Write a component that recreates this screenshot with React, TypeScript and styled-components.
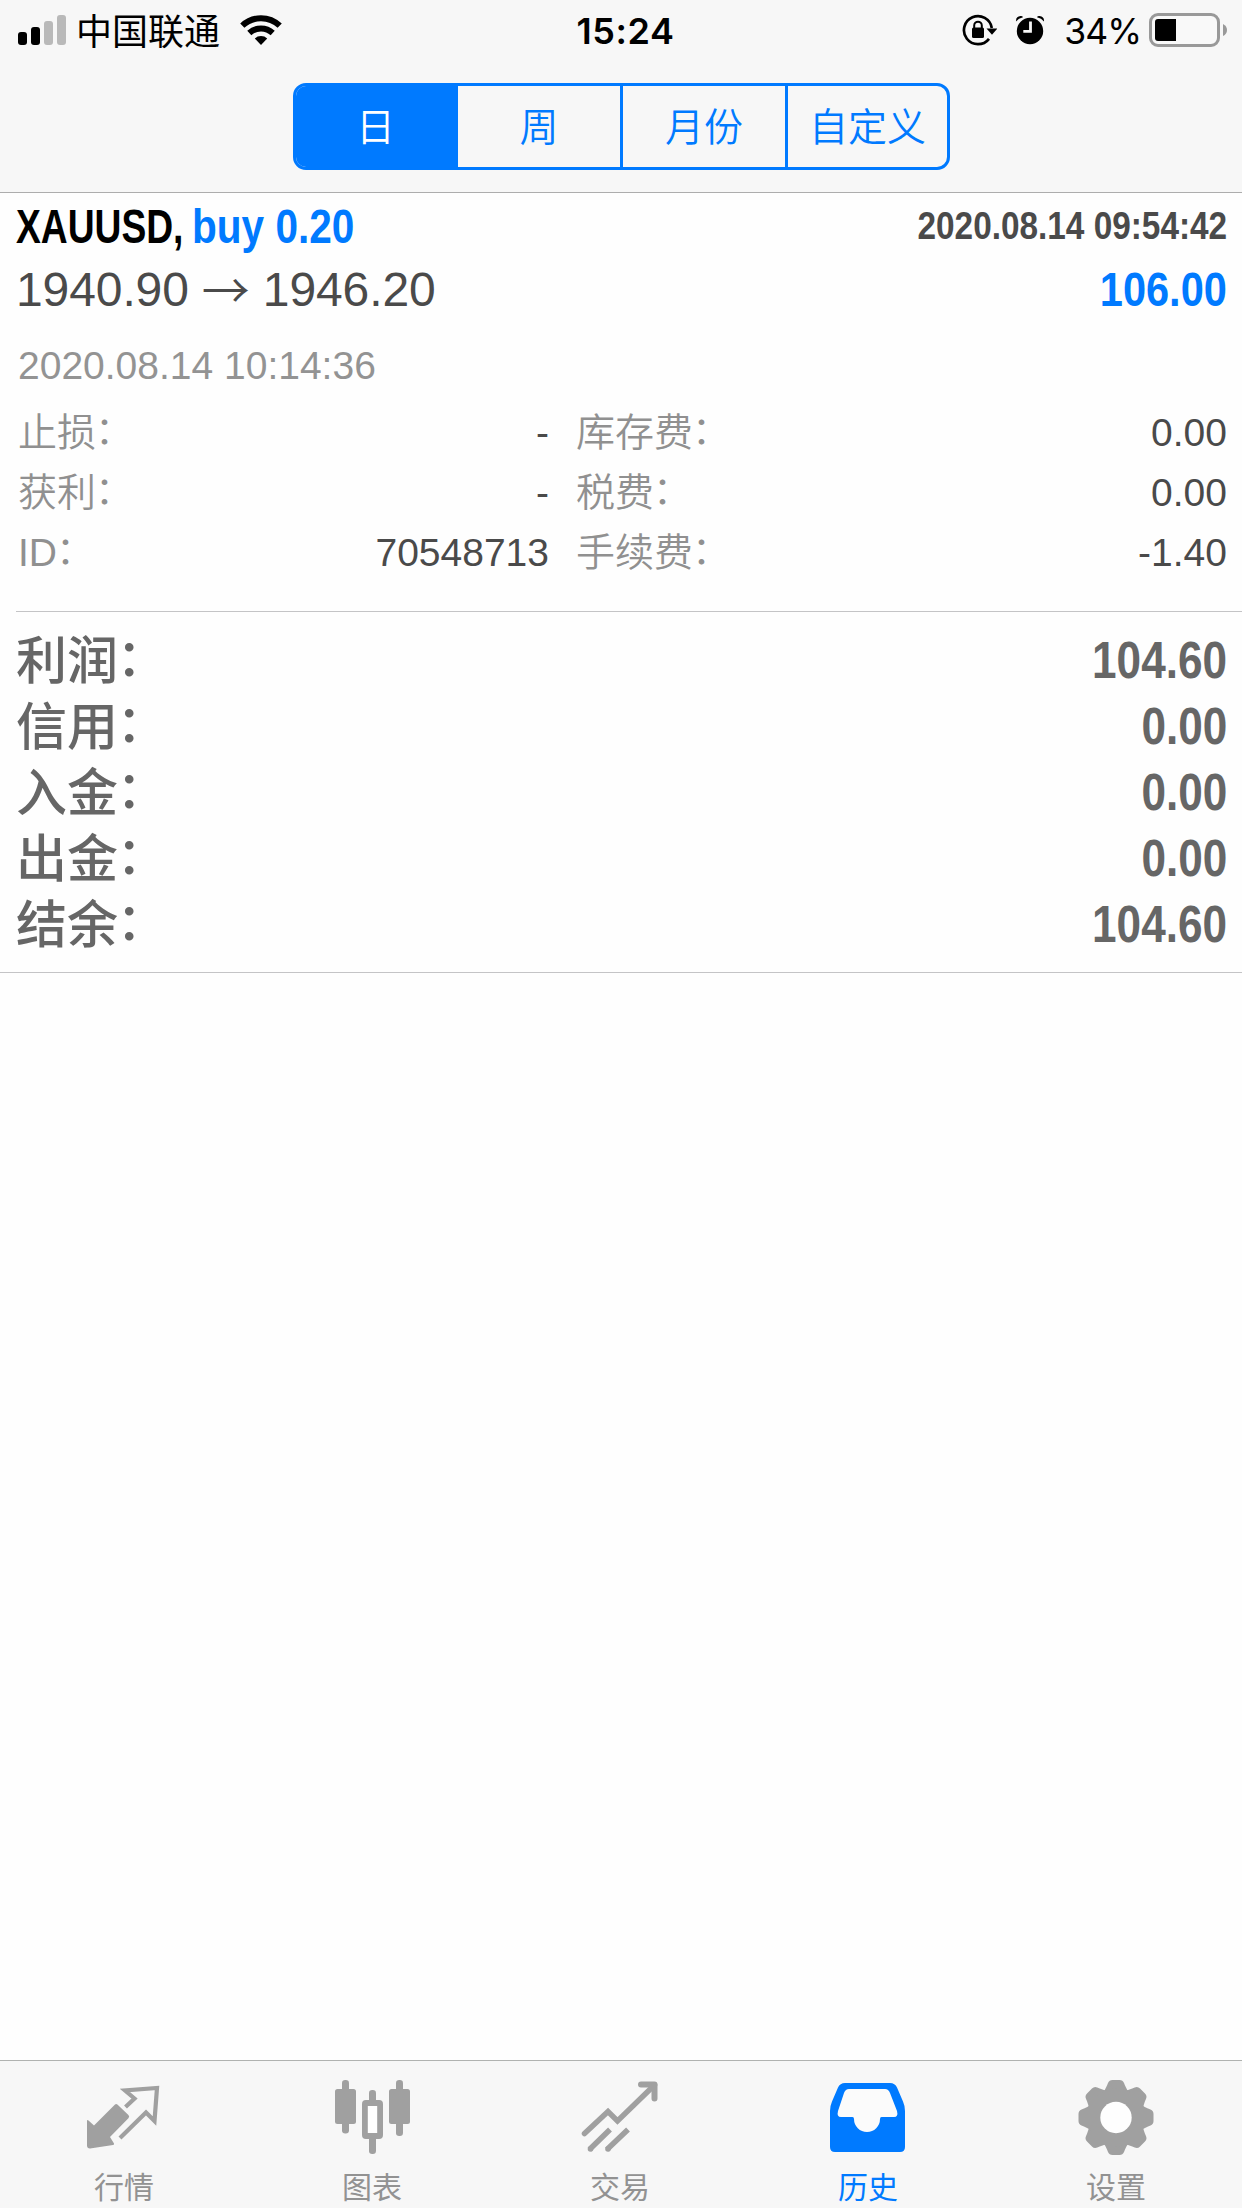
import React from "react";
import styled, { createGlobalStyle } from "styled-components";

const BLUE = "#007aff";
const LATIN = `"Liberation Sans", "Noto Sans CJK SC", sans-serif`;
const CJK = `"Noto Sans CJK SC", "Liberation Sans", sans-serif`;

const GlobalStyle = createGlobalStyle`
  * { box-sizing: border-box; }
  body { margin: 0; background: #fefefe; }
`;

const Screen = styled.div`
  display: flex;
  flex-direction: column;
  width: 1242px;
  height: 2208px;
  overflow: hidden;
  background: #fefefe;
  font-family: ${LATIN};
`;

const Header = styled.header`
  height: 193px;
  flex: none;
  background: #f7f7f7;
  border-bottom: 1px solid #adadad;
`;

const StatusBar = styled.div`
  display: grid;
  grid-template-columns: 1fr auto 1fr;
  height: 60px;
  padding: 0 15px 0 17px;
  color: #000;
`;

const StatusGroup = styled.div<{ $end?: boolean }>`
  display: flex;
  align-items: flex-start;
  justify-content: ${(p) => (p.$end ? "flex-end" : "flex-start")};
  height: 60px;
`;

const Carrier = styled.span`
  margin: 0 20px 0 9px;
  font: 400 36px/59px ${CJK};
`;

const Clock = styled.time`
  font: 600 36px/63px Inter, sans-serif;
  letter-spacing: 0.6px;
  padding-left: 7px;
`;

const Indicators = styled.div`
  display: flex;
  gap: 18px;
`;

const Percent = styled.span`
  margin: 0 8px 0 19px;
  font: 400 35.5px/63px Inter, sans-serif;
  letter-spacing: -1px;
`;

const Segments = styled.nav`
  display: grid;
  grid-template-columns: 162px 165px 165px 159px;
  width: 657px;
  height: 87px;
  margin: 23px 0 0 293px;
  border: 3px solid ${BLUE};
  border-radius: 13px;
  overflow: hidden;
`;

const Segment = styled.button<{ $active?: boolean }>`
  height: 81px;
  padding: 0 0 5px;
  border: 0;
  border-right: 3px solid ${BLUE};
  background: ${(p) => (p.$active ? BLUE : "transparent")};
  color: ${(p) => (p.$active ? "#fff" : BLUE)};
  font: 350 39px/76px ${CJK};
  text-align: center;
  white-space: nowrap;
  &:last-child { border-right: 0; }
`;

const Content = styled.main`
  flex: 1;
`;

const Deal = styled.section`
  display: flex;
  flex-direction: column;
  height: 418px;
  padding: 9px 15px 0 16px;
`;

const Line = styled.div<{ $h: number }>`
  display: flex;
  justify-content: space-between;
  height: ${(p) => p.$h}px;
  line-height: ${(p) => p.$h}px;
  white-space: nowrap;
`;

const Condensed = styled.span<{ $scale: number; $size: number; $color: string; $end?: boolean; $width?: number }>`
  display: block;
  width: ${(p) => (p.$width ? `${p.$width}px` : "auto")};
  font-weight: 700;
  font-size: ${(p) => p.$size}px;
  color: ${(p) => p.$color};
  transform: scaleX(${(p) => p.$scale});
  transform-origin: ${(p) => (p.$end ? "right" : "left")} center;
`;

const OpenTime = styled(Condensed)`
  line-height: 48px;
`;

const Title = styled.div`
  display: flex;
`;

const Prices = styled.div`
  display: flex;
  font-size: 48px;
  letter-spacing: -0.1px;
  color: #4a4a4a;
`;

const Arrow = styled.span`
  width: 74px;
  line-height: 70px;
  text-align: center;
  font-family: "Noto Sans CJK SC", sans-serif;
  font-weight: 350;
`;

const CloseTime = styled.div`
  height: 60px;
  margin: 8px 0 7px 2px;
  font-size: 39px;
  line-height: 60px;
  color: #939393;
`;

const Details = styled.dl`
  display: grid;
  grid-template-columns: 531px 651px;
  grid-auto-rows: 60px;
  column-gap: 27px;
  margin: 0 0 0 2px;
`;

const Detail = styled.div`
  display: flex;
  justify-content: space-between;
  height: 60px;
  font-size: 39px;
  line-height: 60px;
`;

const DetailLabel = styled.dt`
  color: #909090;
  font-family: ${LATIN};
  font-weight: 350;
`;

const DetailValue = styled.dd`
  margin: 0;
  color: #4a4a4a;
`;

const Colon = styled.span`
  line-height: 1;
  vertical-align: 0.06em;
  margin-left: -0.03em;
`;

const Summary = styled.section`
  margin-left: 16px;
  height: 361px;
  padding: 16px 15px 0 0;
  border-top: 1px solid #c4c4c6;
`;

const SummaryLabel = styled.span`
  height: 60px;
  font: 500 51px/58px ${CJK};
  color: #666;
`;

const Rule = styled.hr`
  height: 1px;
  margin: 0;
  border: 0;
  background: #c4c4c6;
`;

const TabBar = styled.footer`
  display: grid;
  grid-template-columns: repeat(5, 248px);
  height: 148px;
  flex: none;
  background: #f7f7f7;
  border-top: 1px solid #b0b2b0;
`;

const Tab = styled.div<{ $active?: boolean }>`
  display: flex;
  flex-direction: column;
  align-items: center;
  padding-top: 17px;
  color: ${(p) => (p.$active ? BLUE : "#a0a0a0")};
`;

const TabLabel = styled.span<{ $active?: boolean }>`
  margin-top: 5px;
  font: 400 30px/36px ${CJK};
  color: ${(p) => (p.$active ? BLUE : "#929292")};
`;

const SignalIcon = () => (
  <svg width="50" height="60" viewBox="17 0 50 60">
    <rect x="18" y="32" width="9" height="13" rx="3" />
    <rect x="31" y="27" width="9" height="18" rx="3" />
    <rect x="44" y="21" width="9" height="24" rx="3" fill="#b9b9b9" />
    <rect x="57" y="15" width="9" height="30" rx="3" fill="#b9b9b9" />
  </svg>
);

const WifiIcon = () => (
  <svg width="42" height="60" viewBox="240 0 42 60" fill="none" stroke="#000" strokeWidth="6">
    <path d="M242.3 25.700a27 27 0 0 1 37.400 0" />
    <path d="M249.300 33a17.200 17.200 0 0 1 23.400 0" />
    <path d="M254.800 38.600a9 9 0 0 1 12.400 0L261 45z" fill="#000" stroke="none" />
  </svg>
);

const RotationLockIcon = () => (
  <svg width="35" height="60" viewBox="961 0 35 60">
    <path d="M990.800 28a14 14 0 1 0-2.800 10.800" fill="none" stroke="#000" strokeWidth="2.700" />
    <path d="M985.500 28.500h11l-5.500 6.200z" />
    <rect x="971" y="27.500" width="12" height="10.500" rx="1.500" />
    <path d="M973.200 28.500v-3a3.800 3.800 0 0 1 7.600 0v3" fill="none" stroke="#000" strokeWidth="2" />
  </svg>
);

const AlarmIcon = () => (
  <svg width="30" height="60" viewBox="1015 0 30 60">
    <circle cx="1030" cy="31" r="13.200" />
    <path d="M1030.500 21.500v9.800h-7.200" fill="none" stroke="#f7f7f7" strokeWidth="2.800" />
    <path d="M1016 21.500q-.5-5 4.500-5.500 2-.2 2.500 1.200-4.500 1-7 4.300zM1044 21.500q.5-5-4.500-5.500-2-.2-2.500 1.200 4.500 1 7 4.300z" />
  </svg>
);

const BatteryIcon = () => (
  <svg width="78" height="60" viewBox="1149 0 78 60">
    <rect x="1150.500" y="14.500" width="68" height="31" rx="7.500" fill="#f9f9f9" stroke="#999" strokeWidth="3" />
    <path d="M1158 19h18v22h-18q-3 0-3-3V22q0-3 3-3z" />
    <path d="M1223 24q4 2 4 6t-4 6z" fill="#999" />
  </svg>
);

const QuotesIcon = () => (
  <svg width="84" height="84" viewBox="82 2078 84 84">
    <path d="M87 2120.500q0-1 1.500 0l5.500 5 21-21q1.200-1 2.400 0l11 10.500q1.600 1.600 0 3.200L110 2137l4 6.500q.5 1.200-1 1.500l-23 3.500q-3 0-3-3z" fill="currentColor" />
    <path d="M125.500 2107l9-8.500-9.500-8 32-2.500-2.500 33-8.500-8.500-26 25.500" fill="none" stroke="currentColor" strokeWidth="4.200" />
  </svg>
);

const ChartIcon = () => (
  <svg width="84" height="84" viewBox="330 2078 84 84" fill="currentColor">
    <rect x="342" y="2080" width="7" height="53.500" rx="3.200" />
    <rect x="335" y="2089" width="21" height="35" rx="2.500" />
    <rect x="396" y="2080" width="7" height="56" rx="3.200" />
    <rect x="389" y="2089" width="21" height="35" rx="2.500" />
    <rect x="369" y="2090" width="7" height="20" rx="3.200" />
    <rect x="369" y="2133" width="7" height="21" rx="3.200" />
    <rect x="364.900" y="2103" width="15.200" height="33" rx="1" fill="#fefefe" stroke="currentColor" strokeWidth="5.800" />
  </svg>
);

const TradeIcon = () => (
  <svg width="84" height="84" viewBox="578 2078 84 84" fill="none" stroke="currentColor" strokeWidth="5.500">
    <path d="M584.500 2133.500l23.500-22 9.500 9.500 37-36" strokeLinecap="round" />
    <path d="M641 2084.500h13.500v14" strokeWidth="6" strokeLinejoin="round" strokeLinecap="round" />
    <path d="M589.500 2149.500l20.500-20M607 2149.500l21-20" />
    <circle cx="590.500" cy="2149" r="2.800" fill="currentColor" stroke="none" />
    <circle cx="608" cy="2149" r="2.800" fill="currentColor" stroke="none" />
  </svg>
);

const HistoryIcon = () => (
  <svg width="84" height="84" viewBox="826 2078 84 84">
    <path fill="currentColor" d="M845 2083h45q5 0 7 4.500l6 14q2 4.500 2 9.500v36q0 5-5 5h-65q-5 0-5-5v-36q0-5 2-9.500l6-14q2-4.500 7-4.500z" />
    <path fill="#fbfbfb" d="M849 2089q-3.500 0-5 4l-6 18q-1.500 6 3 6h11.500q1.500 0 1.500 2a13 13 0 0 0 26 0q0-2 1.500-2H894q4.500 0 3-6l-7-18q-1.500-4-5-4z" />
  </svg>
);

const SettingsIcon = () => (
  <svg width="84" height="84" viewBox="-42 -39.500 84 84" fill="currentColor">
    {[0, 45, 90, 135, 180, 225, 270, 315].map((a) => (
      <path key={a} transform={`rotate(${a})`} d="M-13-25q2-2.500 4-7l1-2.500q1.200-3 4.500-3h7q3.300 0 4.500 3L9-32q2 4.500 4 7z" />
    ))}
    <circle r="29" />
    <circle r="15.700" fill="#fefefe" />
  </svg>
);

const details = [
  ["止损", "-"],
  ["库存费", "0.00"],
  ["获利", "-"],
  ["税费", "0.00"],
  ["ID", "70548713"],
  ["手续费", "-1.40"],
];

const totals = [
  ["利润", "104.60"],
  ["信用", "0.00"],
  ["入金", "0.00"],
  ["出金", "0.00"],
  ["结余", "104.60"],
];

const tabs = [
  { label: "行情", Icon: QuotesIcon },
  { label: "图表", Icon: ChartIcon },
  { label: "交易", Icon: TradeIcon },
  { label: "历史", Icon: HistoryIcon, active: true },
  { label: "设置", Icon: SettingsIcon },
];

export default function App() {
  return (
    <Screen>
      <GlobalStyle />
      <Header>
        <StatusBar>
          <StatusGroup>
            <SignalIcon />
            <Carrier>中国联通</Carrier>
            <WifiIcon />
          </StatusGroup>
          <Clock>15:24</Clock>
          <StatusGroup $end>
            <Indicators>
              <RotationLockIcon />
              <AlarmIcon />
            </Indicators>
            <Percent>34%</Percent>
            <BatteryIcon />
          </StatusGroup>
        </StatusBar>
        <Segments>
          <Segment $active>日</Segment>
          <Segment>周</Segment>
          <Segment>月份</Segment>
          <Segment>自定义</Segment>
        </Segments>
      </Header>
      <Content>
        <Deal>
          <Line $h={50}>
            <Title>
              <Condensed $size={48} $scale={0.775} $color="#000" $width={176}>XAUUSD,</Condensed>
              <Condensed $size={48} $scale={0.845} $color={BLUE}>buy 0.20</Condensed>
            </Title>
            <OpenTime $size={39} $scale={0.855} $color="#4a4a4a" $end>2020.08.14 09:54:42</OpenTime>
          </Line>
          <Line $h={76}>
            <Prices>
              <span>1940.90</span>
              <Arrow>→</Arrow>
              <span>1946.20</span>
            </Prices>
            <Condensed $size={48} $scale={0.865} $color={BLUE} $end>106.00</Condensed>
          </Line>
          <CloseTime>2020.08.14 10:14:36</CloseTime>
          <Details>
            {details.map(([label, value]) => (
              <Detail key={label}>
                <DetailLabel>{label}<Colon>：</Colon></DetailLabel>
                <DetailValue>{value}</DetailValue>
              </Detail>
            ))}
          </Details>
        </Deal>
        <Summary>
          {totals.map(([label, value]) => (
            <Line $h={66} key={label}>
              <SummaryLabel>{label}<Colon>：</Colon></SummaryLabel>
              <Condensed $size={51} $scale={0.865} $color="#666" $end>{value}</Condensed>
            </Line>
          ))}
        </Summary>
        <Rule />
      </Content>
      <TabBar>
        {tabs.map(({ label, Icon, active }) => (
          <Tab key={label} $active={active}>
            <Icon />
            <TabLabel $active={active}>{label}</TabLabel>
          </Tab>
        ))}
      </TabBar>
    </Screen>
  );
}
